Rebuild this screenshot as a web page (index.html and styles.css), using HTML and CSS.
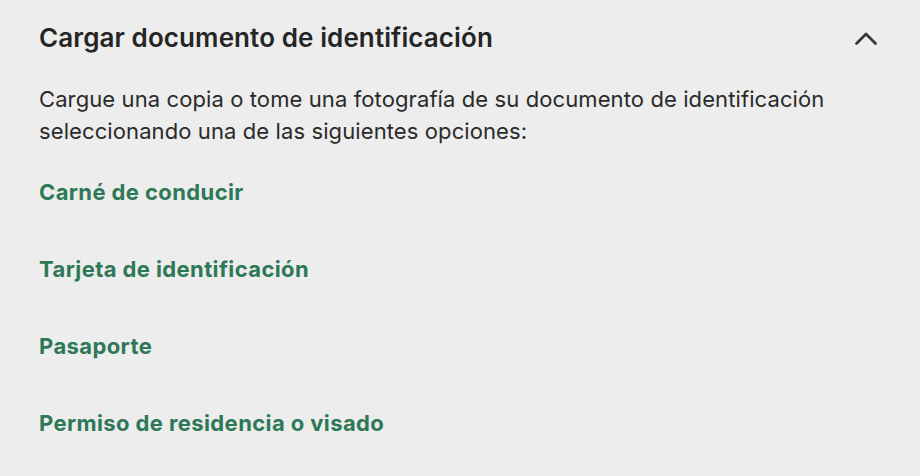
FILE: index.html
```html
<!DOCTYPE html>
<html lang="es">
<head>
    <meta charset="UTF-8">
    <meta name="viewport" content="width=device-width, initial-scale=1.0">
    <title>Cargar documento de identificación</title>
    <link rel="stylesheet" href="styles.css">
</head>
<body>
    <section class="panel">
        <div class="panel-header">
            <h2 class="panel-title">Cargar documento de identificación</h2>
            <button class="toggle" aria-label="Contraer">
                <svg width="24" height="16" viewBox="0 0 24 16">
                    <path d="M2.5 13.5 L12 4 L21.5 13.5" fill="none" stroke="#383838" stroke-width="2.8" stroke-linecap="round" stroke-linejoin="round"/>
                </svg>
            </button>
        </div>
        <p class="panel-text">
            Cargue una copia o tome una fotografía de su documento de identificación
            seleccionando una de las siguientes opciones:
        </p>
        <ul class="options">
            <li><a href="#" class="option">Carné de conducir</a></li>
            <li><a href="#" class="option">Tarjeta de identificación</a></li>
            <li><a href="#" class="option">Pasaporte</a></li>
            <li><a href="#" class="option">Permiso de residencia o visado</a></li>
        </ul>
    </section>
</body>
</html>
```

FILE: styles.css
```css
body {
    margin: 0;
    background-color: #ecedec;
    font-family: Inter, "Noto Sans", sans-serif;
    color: #2a2a2a;
}
.panel {
    padding: 22px 42px 0 39px;
}
.panel-header {
    display: flex;
    justify-content: space-between;
    align-items: center;
    height: 32px;
}
.panel-title {
    margin: 0;
    font-size: 26px;
    font-weight: 600;
    line-height: 32px;
    letter-spacing: 0.1px;
    color: #252525;
}
.toggle {
    border: none;
    background: none;
    padding: 0;
    width: 24px;
    height: 16px;
    cursor: pointer;
}
.toggle svg {
    display: block;
}
.panel-text {
    margin: 29px 0 0 0;
    font-size: 22px;
    line-height: 32px;
    letter-spacing: 0.1px;
    width: 820px;
}
.options {
    list-style: none;
    margin: 6px 0 0 0;
    padding: 0;
}
.options li {
    height: 77px;
    display: flex;
    align-items: center;
}
.option {
    font-size: 22px;
    font-weight: 700;
    letter-spacing: 0.4px;
    color: #2e7857;
    text-decoration: none;
}
```
